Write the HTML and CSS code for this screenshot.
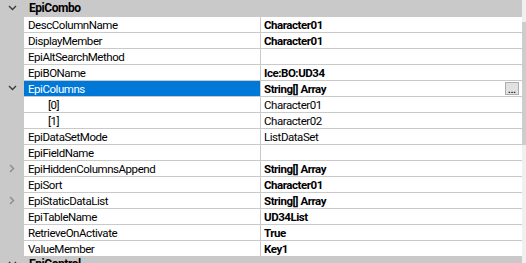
FILE: index.html
```html
<!DOCTYPE html>
<html lang="en">
<head>
    <meta charset="UTF-8">
    <title>Properties - EpiCombo</title>
    <link rel="stylesheet" href="styles.css">
</head>
<body>
    <div class="grid-wrap">
        <div class="grid">
            <div class="cat">
                <span class="gut"><svg class="chev" width="9" height="6" viewBox="0 0 9 6"><polyline points="1,1 4.5,4.5 8,1" /></svg></span>
                <span class="cat-name">EpiCombo</span>
            </div>
            <div class="row"><span class="gut"></span><span class="name">DescColumnName</span><span class="val bold">Character01</span></div>
            <div class="row"><span class="gut"></span><span class="name">DisplayMember</span><span class="val bold">Character01</span></div>
            <div class="row"><span class="gut"></span><span class="name">EpiAltSearchMethod</span><span class="val"></span></div>
            <div class="row"><span class="gut"></span><span class="name">EpiBOName</span><span class="val bold">Ice:BO:UD34</span></div>
            <div class="row">
                <span class="gut"><svg class="chev" width="9" height="6" viewBox="0 0 9 6"><polyline points="1,1 4.5,4.5 8,1" /></svg></span>
                <span class="name selected">EpiColumns</span>
                <span class="val bold">String[] Array<span class="dots-btn">...</span></span>
            </div>
            <div class="row"><span class="gut"></span><span class="name child">[0]</span><span class="val">Character01</span></div>
            <div class="row"><span class="gut"></span><span class="name child">[1]</span><span class="val">Character02</span></div>
            <div class="row"><span class="gut"></span><span class="name">EpiDataSetMode</span><span class="val">ListDataSet</span></div>
            <div class="row"><span class="gut"></span><span class="name">EpiFieldName</span><span class="val"></span></div>
            <div class="row">
                <span class="gut"><svg class="chev light" width="6" height="9" viewBox="0 0 6 9"><polyline points="1,1 4.5,4.5 1,8" /></svg></span>
                <span class="name">EpiHiddenColumnsAppend</span><span class="val bold">String[] Array</span>
            </div>
            <div class="row"><span class="gut"></span><span class="name">EpiSort</span><span class="val bold">Character01</span></div>
            <div class="row">
                <span class="gut"><svg class="chev light" width="6" height="9" viewBox="0 0 6 9"><polyline points="1,1 4.5,4.5 1,8" /></svg></span>
                <span class="name">EpiStaticDataList</span><span class="val bold">String[] Array</span>
            </div>
            <div class="row"><span class="gut"></span><span class="name">EpiTableName</span><span class="val bold">UD34List</span></div>
            <div class="row"><span class="gut"></span><span class="name">RetrieveOnActivate</span><span class="val bold">True</span></div>
            <div class="row"><span class="gut"></span><span class="name">ValueMember</span><span class="val bold">Key1</span></div>
            <div class="cat">
                <span class="gut"><svg class="chev" width="9" height="6" viewBox="0 0 9 6"><polyline points="1,1 4.5,4.5 8,1" /></svg></span>
                <span class="cat-name">EpiControl</span>
            </div>
        </div>
        <div class="vscroll"><div class="thumb"></div></div>
    </div>
</body>
</html>
```

FILE: styles.css
```css
body {
    margin: 0;
    height: 263px;
    overflow: hidden;
    font-family: Roboto, "Liberation Sans", sans-serif;
    font-size: 11.5px;
    letter-spacing: -0.45px;
    color: #000;
    background: #fff;
}
.grid-wrap {
    display: flex;
    height: 263px;
}
.grid {
    width: 522px;
    display: flex;
    flex-direction: column;
}
.cat, .row {
    display: flex;
    height: 16px;
    flex-shrink: 0;
}
.cat {
    background-color: #c9c9c9;
}
.gut {
    width: 24px;
    flex-shrink: 0;
    background-color: #c9c9c9;
    display: flex;
    align-items: center;
    justify-content: center;
}
.chev polyline {
    fill: none;
    stroke: #3c3c3c;
    stroke-width: 1.4;
}
.chev.light polyline {
    stroke: #8a8a8a;
}
.cat-name {
    font-weight: bold;
    font-size: 12px;
    line-height: 16px;
    padding-left: 5px;
}
.name, .val {
    box-sizing: border-box;
    border-top: 1px solid #c9c9c9;
    line-height: 16px;
    white-space: nowrap;
    overflow: hidden;
}
.name {
    width: 237px;
    flex-shrink: 0;
    border-right: 1px solid #c9c9c9;
    padding-left: 4px;
}
.name.child {
    padding-left: 24px;
}
.name.selected {
    background-color: #0078d7;
    color: #fff;
}
.val {
    flex: 1;
    display: flex;
    align-items: center;
    padding-left: 3px;
}
.bold {
    font-weight: bold;
}
.dots-btn {
    margin-left: auto;
    margin-right: 3px;
    width: 14px;
    height: 13px;
    box-sizing: border-box;
    border: 1px solid #adadad;
    background-color: #e1e1e1;
    font-size: 9px;
    line-height: 15px;
    text-align: center;
    letter-spacing: 0;
}
.vscroll {
    width: 4px;
    background-color: #f0f0f0;
}
.thumb {
    margin-top: 22px;
    height: 123px;
    background-color: #cdcdcd;
}
```
